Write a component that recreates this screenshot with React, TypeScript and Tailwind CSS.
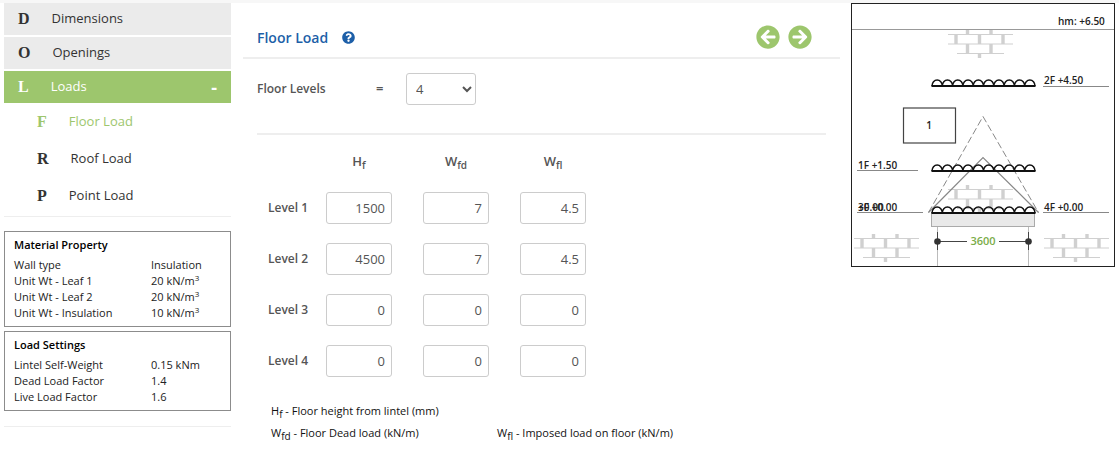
import type { ReactNode } from "react";
import { FaArrowCircleLeft, FaArrowCircleRight, FaQuestionCircle } from "react-icons/fa";

const NAV = [
  { key: "D", label: "Dimensions" },
  { key: "O", label: "Openings" },
  { key: "L", label: "Loads", open: true },
];

const LOAD_PAGES = [
  { key: "F", label: "Floor Load", current: true },
  { key: "R", label: "Roof Load" },
  { key: "P", label: "Point Load" },
];

const PER_VOLUME = (
  <>
    kN/m<sup className="relative -top-1 text-[8px] leading-none">3</sup>
  </>
);

const MATERIAL: [string, ReactNode][] = [
  ["Wall type", "Insulation"],
  ["Unit Wt - Leaf 1", <>20 {PER_VOLUME}</>],
  ["Unit Wt - Leaf 2", <>20 {PER_VOLUME}</>],
  ["Unit Wt - Insulation", <>10 {PER_VOLUME}</>],
];

const SETTINGS: [string, ReactNode][] = [
  ["Lintel Self-Weight", "0.15 kNm"],
  ["Dead Load Factor", "1.4"],
  ["Live Load Factor", "1.6"],
];

const LEVELS = [
  [1500, 7, 4.5],
  [4500, 7, 4.5],
  [0, 0, 0],
  [0, 0, 0],
];

const COLUMNS = [
  { base: "H", sub: "f" },
  { base: "W", sub: "fd" },
  { base: "W", sub: "fl" },
];

function Symbol({ base, sub }: { base: string; sub: string }) {
  return (
    <>
      {base}
      <sub className="relative top-[3px] align-baseline text-[10px] leading-none">{sub}</sub>
    </>
  );
}

function InfoBox({ title, rows }: { title: string; rows: [string, ReactNode][] }) {
  return (
    <section className="border border-[#8c8c8c] px-[9px] pt-[5px] pb-[5px] text-[#222]">
      <h3 className="mb-1 text-[11px] leading-4 font-semibold text-black">{title}</h3>
      <dl className="grid grid-cols-[137px_1fr] text-[11px] leading-4">
        {rows.map(([name, value]) => (
          <div key={name} className="contents">
            <dt>{name}</dt>
            <dd>{value}</dd>
          </div>
        ))}
      </dl>
    </section>
  );
}

function Sidebar() {
  return (
    <aside className="w-[227px] shrink-0">
      <nav>
        <ul className="flex flex-col gap-[2px]">
          {NAV.map((item) => (
            <li key={item.key}>
              <a
                href="#"
                className={`flex h-8 items-center px-[14px] text-[13px] ${
                  item.open ? "bg-[#9dc66d] text-white" : "bg-[#ebebeb] text-[#333]"
                }`}
              >
                <b className="mr-[22px] font-['Liberation_Serif',serif] text-[16px]">{item.key}</b>
                {item.label}
                {item.open && <span className="ml-auto text-[18px] leading-none font-bold">-</span>}
              </a>
            </li>
          ))}
        </ul>
        <ul className="border-b border-[#eee] pb-[2px]">
          {LOAD_PAGES.map((item) => (
            <li key={item.key}>
              <a
                href="#"
                className={`flex h-[37px] items-center pl-[33px] text-[13px] ${
                  item.current ? "text-[#9dc66d]" : "text-[#333]"
                }`}
              >
                <b className="mr-[22px] font-['Liberation_Serif',serif] text-[16px]">{item.key}</b>
                {item.label}
              </a>
            </li>
          ))}
        </ul>
      </nav>
      <div className="mt-[14px] flex flex-col gap-1 border-b border-[#eee] pb-[15px]">
        <InfoBox title="Material Property" rows={MATERIAL} />
        <InfoBox title="Load Settings" rows={SETTINGS} />
      </div>
    </aside>
  );
}

function FloorLoadForm() {
  return (
    <main className="min-w-0 flex-1 text-[#555]">
      <header className="flex h-14 items-center border-b-2 border-[#eee] pt-[14px] pr-7 pl-[14px]">
        <h1 className="text-[14px] font-semibold text-[#1d5fa8]">Floor Load</h1>
        <button type="button" aria-label="Help" className="ml-[14px] text-[#1d5fa8]">
          <FaQuestionCircle size={13} />
        </button>
        <div className="ml-auto flex gap-2 text-[#9dc66d]">
          <button type="button" aria-label="Previous">
            <FaArrowCircleLeft size={24} />
          </button>
          <button type="button" aria-label="Next">
            <FaArrowCircleRight size={24} />
          </button>
        </div>
      </header>

      <div className="mr-[14px] ml-[14px] flex items-center border-b-2 border-[#eee] pt-[14px] pb-7 text-[13px]">
        <label htmlFor="levels" className="w-[119px] text-[12px] font-semibold">
          Floor Levels
        </label>
        <span className="w-[30px] font-semibold">=</span>
        <select
          id="levels"
          defaultValue="4"
          className="h-8 w-[70px] rounded-[3px] border border-[#ccc] bg-white pl-[5px]"
        >
          <option>1</option>
          <option>2</option>
          <option>3</option>
          <option>4</option>
        </select>
      </div>

      <table className="mt-[7px] ml-[25px] table-fixed">
        <thead>
          <tr className="h-10 text-[13px]">
            <td className="w-[58px]" />
            {COLUMNS.map((c) => (
              <th key={c.sub} scope="col" className="w-[97px] pr-[31px] text-center font-semibold">
                <Symbol {...c} />
              </th>
            ))}
          </tr>
        </thead>
        <tbody>
          {LEVELS.map((row, i) => (
            <tr key={i} className="h-[51px] text-[13px]">
              <th scope="row" className="text-left text-[12px] font-semibold">
                Level {i + 1}
              </th>
              {row.map((value, j) => (
                <td key={j}>
                  <input
                    type="text"
                    aria-label={`Level ${i + 1} ${COLUMNS[j].base}${COLUMNS[j].sub}`}
                    defaultValue={value}
                    className="block h-8 w-[66px] rounded-[3px] border border-[#ccc] px-[6px] text-right"
                  />
                </td>
              ))}
            </tr>
          ))}
        </tbody>
      </table>

      <div className="mt-[14px] ml-7 grid grid-cols-[226px_1fr] text-[11px] leading-[22px] text-[#111]">
        <p className="col-span-2">
          <Symbol base="H" sub="f" /> - Floor height from lintel (mm)
        </p>
        <p>
          <Symbol base="W" sub="fd" /> - Floor Dead load (kN/m)
        </p>
        <p>
          <Symbol base="W" sub="fl" /> - Imposed load on floor (kN/m)
        </p>
      </div>
    </main>
  );
}

// Patch of brickwork, drawn from its top-left corner
function Bricks({ x, y }: { x: number; y: number }) {
  return (
    <g transform={`translate(${x} ${y})`} fill="none" stroke="#d0d0d0">
      <path d="M0 4.5H65M0 14H65M9 23.5H56" strokeWidth="1.2" />
      <path d="M19.5 0V4M43 0V4M8 5V14M31.5 5V14M55 5V14M19.5 14V23M43 14V23M31.5 24V28" strokeWidth="3.4" />
    </g>
  );
}

// Uniform load: ten half-round bumps standing on a base line
function UniformLoad({ y }: { y: number }) {
  const bumps = Array.from({ length: 10 }, () => "a5.15 6 0 0 1 10.3 0").join("");
  return (
    <g fill="none" stroke="#111">
      <path d={`M81 ${y}${bumps}`} strokeWidth="1.5" />
      <path d={`M80.5 ${y}H184.5`} strokeWidth="2" />
    </g>
  );
}

function WallDrawing() {
  return (
    <svg
      viewBox="0 0 264 264"
      role="img"
      aria-label="Wall elevation"
      className="h-[264px] w-[264px] shrink-0"
      fontFamily="'Open Sans', sans-serif"
      fontSize="10"
      fontWeight="600"
      fill="#222"
    >
      <rect x="0.5" y="0.5" width="263" height="263" fill="#fff" stroke="#222" />
      <path d="M1 26.5H263" stroke="#999" />
      <text x="207" y="22">hm: +6.50</text>

      <Bricks x={97} y={27} />
      <Bricks x={97} y={182} />
      <Bricks x={3} y={231} />
      <Bricks x={193} y={231} />

      <path d="M77.5 209.5L132 113.5L187.5 209.5" fill="none" stroke="#888" strokeDasharray="7 3" />
      <path d="M77.5 209.5L132 154.5L187.5 209.5" fill="none" stroke="#888" strokeWidth="1.2" />

      <UniformLoad y={83} />
      <UniformLoad y={168} />
      <rect x="80.5" y="210.5" width="103" height="13" fill="#e9e9e9" stroke="#aaa" />
      <UniformLoad y={210} />

      <path d="M192 83.5H258M6 167.5H67M6 209.5H72M192 209.5H258" stroke="#888" />
      <text x="193" y="81">2F +4.50</text>
      <text x="7" y="166">1F +1.50</text>
      <text x="7" y="208">3F +0.00</text>
      <text x="7" y="208">+0.00</text>
      <text x="193" y="208">4F +0.00</text>

      <rect x="52.5" y="105" width="52" height="35" fill="#fff" stroke="#444" strokeWidth="1.2" />
      <text x="78" y="126" textAnchor="middle">
        1
      </text>

      <path d="M86.5 224V263M177.5 224V263" stroke="#bbb" />
      <path d="M86.5 229V247M177.5 229V247" stroke="#444" />
      <path d="M86.5 238.5H116M148 238.5H177.5" stroke="#444" />
      <circle cx="86.5" cy="238.5" r="3.3" fill="#333" />
      <circle cx="177.5" cy="238.5" r="3.3" fill="#333" />
      <text x="132" y="242" textAnchor="middle" fontSize="11" fill="#7aac48">
        3600
      </text>
    </svg>
  );
}

export default function App() {
  return (
    <div className="min-h-screen bg-white font-['Open_Sans',sans-serif]">
      <div className="h-[3px] bg-[#f7f7f7]" />
      <div className="flex items-start pr-1 pl-1">
        <Sidebar />
        <div className="flex min-w-0 flex-1 gap-[11px] pl-3">
          <FloorLoadForm />
          <WallDrawing />
        </div>
      </div>
    </div>
  );
}
